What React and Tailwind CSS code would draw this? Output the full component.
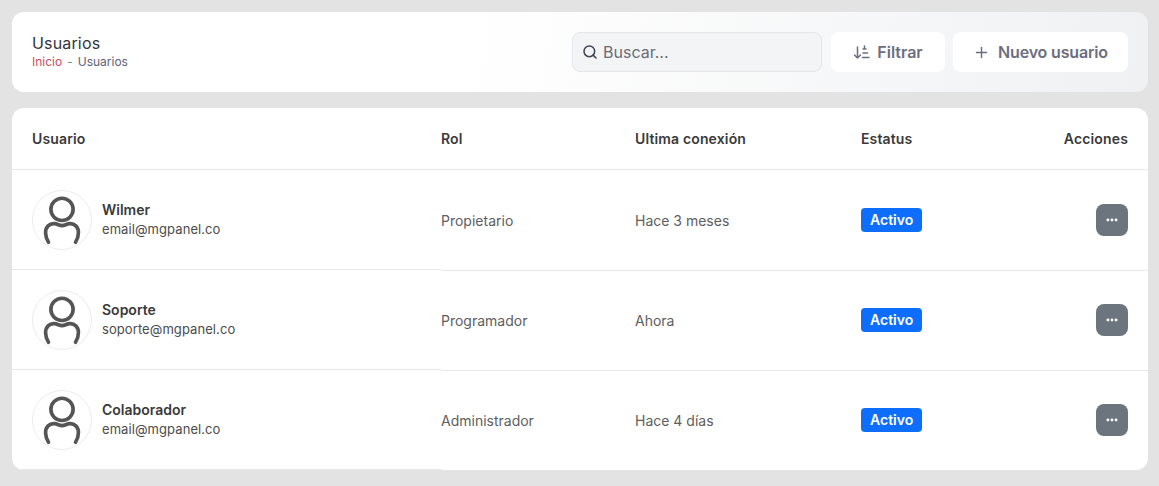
import React from "react";
import { Search, Plus, MoreHorizontal } from "lucide-react";

const users = [
    { name: "Wilmer", email: "email@mgpanel.co", role: "Propietario", last: "Hace 3 meses" },
    { name: "Soporte", email: "soporte@mgpanel.co", role: "Programador", last: "Ahora" },
    { name: "Colaborador", email: "email@mgpanel.co", role: "Administrador", last: "Hace 4 días" },
];

const SortIcon = () => (
    <svg width="17" height="17" viewBox="0 0 17 17" fill="none" stroke="currentColor" strokeWidth="1.5" strokeLinecap="round" strokeLinejoin="round">
        <path d="M4.500 3v11M1.500 11 4.500 14 7.500 11" />
        <path d="M11.500 2v3M10 5h3M10 9h4.500M9.500 13.500h6.500" />
    </svg>
);

const Avatar = () => (
    <div className="w-[60px] h-[60px] rounded-full border border-[#ececec] bg-white flex items-center justify-center shrink-0">
        <svg width="60" height="60" viewBox="0 0 60 60" fill="none" stroke="#555555" strokeWidth="3.8" strokeLinecap="round">
            <circle cx="30" cy="19" r="11.500" />
            <path d="M16 53C14 50 13 47 13 43C13 37 17 33.500 22 33.800C25.500 34 27 35.800 30 35.800C33 35.800 34.500 34 38 33.800C43 33.500 47 37 47 43C47 47 46 50 44 53" />
        </svg>
    </div>
);

export default function App() {
    return (
        <div className="min-h-[486px] bg-[#e3e3e3] pt-3 pl-3 pr-[11px] font-['Inter',sans-serif] text-[#3f4254]">
            {/* Page header */}
            <div className="h-20 rounded-xl bg-[linear-gradient(100deg,#ffffff_40%,#f0f1f3_100%)] px-5 flex items-center justify-between">
                <div>
                    <h1 className="text-[16px] leading-5 text-[#33343d] -mt-px tracking-[0.01em]">Usuarios</h1>
                    <p className="text-[12px] leading-4 mt-px">
                        <span className="text-[#cf4a5e]">Inicio</span>
                        <span className="text-[#7e8299] mx-[5px]">-</span>
                        <span className="text-[#5e6278]">Usuarios</span>
                    </p>
                </div>
                <div className="flex items-center">
                    <div className="w-[250px] h-10 mr-[9px] rounded-lg border border-[#e4e6ea] bg-[#f3f4f6] flex items-center gap-[5px] pl-[9px]">
                        <Search size={16} strokeWidth={2.25} className="text-[#3f4254]" />
                        <span className="text-[16px] text-[#6a6c75]">Buscar...</span>
                    </div>
                    <button className="w-[114px] h-10 mr-2 rounded-lg bg-white flex items-center justify-center gap-[7px] text-[#6b6e7e] text-[16px] font-semibold">
                        <SortIcon />
                        Filtrar
                    </button>
                    <button className="w-[175px] h-10 rounded-lg bg-white flex items-center justify-center gap-2 text-[#6b6e7e] text-[16px] tracking-[-0.01em] font-semibold">
                        <Plus size={17} strokeWidth={2} />
                        Nuevo usuario
                    </button>
                </div>
            </div>

            {/* Users table */}
            <div className="mt-4 rounded-xl bg-white overflow-hidden">
                <div className="h-[62px] flex items-center border-b border-[#e8e8e8] text-[14px] font-semibold text-[#3a3a3a] tracking-[0.01em]">
                    <div className="w-[429px] pl-5">Usuario</div>
                    <div className="w-[194px]">Rol</div>
                    <div className="w-[226px]">Ultima conexión</div>
                    <div className="w-[100px]">Estatus</div>
                    <div className="flex-1 text-right pr-5">Acciones</div>
                </div>
                {users.map((user, i) => (
                    <div key={user.name} className="h-[100px] flex">
                        <div className="w-[429px] h-[100px] pl-5 flex items-center gap-2.5 border-b border-[#e8e8e8]">
                            <Avatar />
                            <div className="pb-0.5">
                                <div className="text-[14px] leading-5 font-semibold text-[#3a3a3a]">{user.name}</div>
                                <div className="text-[13px] leading-[18px] text-[#4b4b4b] tracking-[0.006em]">{user.email}</div>
                            </div>
                        </div>
                        <div className={`flex-1 flex items-center text-[14px] text-[#5e5e5e] ${i < 2 ? "h-[101px] border-b border-[#e8e8e8]" : ""}`}>
                            <div className="w-[194px]">{user.role}</div>
                            <div className="w-[226px]">{user.last}</div>
                            <div className="w-[100px]">
                                <span className="inline-block h-6 leading-6 px-[9px] rounded bg-[#0d6efd] text-white text-[14px] font-semibold">Activo</span>
                            </div>
                            <div className="flex-1 flex justify-end pr-5">
                                <button className="w-8 h-8 rounded-lg bg-[#6c757d] flex items-center justify-center text-white">
                                    <MoreHorizontal size={14} strokeWidth={3} />
                                </button>
                            </div>
                        </div>
                    </div>
                ))}
            </div>
        </div>
    );
}
